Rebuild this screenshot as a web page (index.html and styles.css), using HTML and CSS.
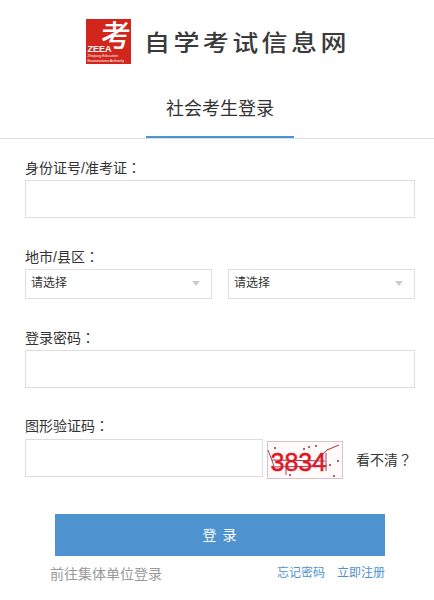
FILE: index.html
```
<!DOCTYPE html>
<html lang="zh-CN">
<head>
<meta charset="utf-8">
<title>社会考生登录</title>
<link rel="stylesheet" href="styles.css">
</head>
<body>
<header class="brand">
  <svg class="brand-mark" width="46" height="50" viewBox="0 0 46 50" aria-label="ZEEA">
    <rect x="0" y="5" width="45" height="45" fill="#d2261c"/>
    <text class="mark-glyph" x="15" y="32" fill="#fff">考</text>
    <text class="mark-name" x="1.5" y="37.5" fill="#fff">ZEEA</text>
    <text class="mark-small" x="1.5" y="42.5" fill="#fff">Zhejiang Education</text>
    <text class="mark-small" x="1.5" y="47.5" fill="#fff">Examinations Authority</text>
  </svg>
  <div class="brand-name">自学考试信息网</div>
</header>

<nav class="tabs">
  <div class="tab">社会考生登录</div>
</nav>

<form class="form">
  <div class="field field-id">
    <div class="label">身份证号/准考证<span class="punct" lang="zh-TW">：</span></div>
    <div class="box"></div>
  </div>
  <div class="field field-area">
    <div class="label">地市/县区<span class="punct" lang="zh-TW">：</span></div>
    <div class="selects">
      <div class="select"><span>请选择</span><i class="caret"></i></div>
      <div class="select"><span>请选择</span><i class="caret"></i></div>
    </div>
  </div>
  <div class="field field-pass">
    <div class="label">登录密码<span class="punct" lang="zh-TW">：</span></div>
    <div class="box"></div>
  </div>
  <div class="field field-code">
    <div class="label label-code">图形验证码<span class="punct" lang="zh-TW">：</span></div>
    <div class="code-row">
      <div class="box box-code"></div>
      <svg class="captcha" width="76" height="38" viewBox="0 0 76 38">
        <rect x="0.5" y="0.5" width="75" height="37" fill="#fffafa" stroke="#d8c4c8"/>
        <text class="captcha-text" x="3.5" y="30" fill="#e6141c" stroke="#e6141c" stroke-width="0.5">3834</text>
        <path d="M1 9 L7 25" stroke="#a8404c" stroke-width="1"/>
        <path d="M5 19 L58 20 M5 26 L60 25 M40 30 L60 9 L72 4" stroke="#b03048" stroke-width="1" fill="none"/>
        <path d="M19 27 V34 M59 12 V30" stroke="#a8404c" stroke-width="1"/>
        <g fill="#b06070">
          <rect x="36" y="7" width="2" height="2"/><rect x="41" y="5" width="2" height="2"/><rect x="48" y="4" width="2" height="2"/>
          <rect x="7" y="6" width="2" height="2"/><rect x="62" y="23" width="2" height="2"/><rect x="70" y="19" width="2" height="2"/>
          <rect x="22" y="33" width="2" height="2"/><rect x="66" y="34" width="2" height="2"/>
        </g>
      </svg>
      <span class="refresh">看不清<span class="punct" lang="zh-TW">？</span></span>
    </div>
  </div>
  <div class="submit">登 录</div>
  <div class="links">
    <a class="link-group">前往集体单位登录</a>
    <div class="link-side">
      <a class="link-blue">忘记密码</a>
      <a class="link-blue">立即注册</a>
    </div>
  </div>
</form>
</body>
</html>
```
FILE: styles.css
```
* { box-sizing: border-box; }
html, body { margin: 0; padding: 0; }
body {
  width: 434px;
  height: 600px;
  overflow: hidden;
  background: #fff;
  color: #333;
  font-family: "Liberation Sans", "Noto Sans CJK SC", sans-serif;
  font-size: 14px;
}
.punct { font-family: "Noto Sans CJK TC", sans-serif; }
.brand {
  height: 79px;
  padding: 14px 0 0 86px;
  display: flex;
  align-items: flex-start;
}
.brand-mark { display: block; flex: none; overflow: visible; }
.mark-glyph { font-family: "Noto Sans CJK SC", sans-serif; font-size: 30px; font-weight: 500; }
.mark-name { font-family: "Liberation Sans", sans-serif; font-size: 9px; font-weight: 700; }
.mark-small { font-family: "Liberation Sans", sans-serif; font-size: 3.6px; }
.brand-name {
  margin: 13px 0 0 12px;
  font-family: "Noto Sans CJK SC", sans-serif;
  font-size: 26px;
  font-weight: 500;
  line-height: 28px;
  letter-spacing: 3.4px;
  color: #3a3a3a;
  white-space: nowrap;
  transform: scaleY(0.88);
}
.tabs {
  height: 60px;
  display: flex;
  justify-content: center;
  border-bottom: 1px solid #ddd;
  padding-left: 6px;
}
.tab {
  width: 148px;
  height: 59px;
  text-align: center;
  font-size: 18px;
  line-height: 60px;
  color: #333;
  border-bottom: 2px solid #4e93cf;
}
.form { padding: 0 19px 0 25px; }
.field-id { padding-top: 18px; }
.field-area { padding-top: 28px; }
.field-pass { padding-top: 28px; }
.field-code { padding-top: 27px; }
.label { height: 23px; line-height: 20px; color: #333; }
.label-code { height: 24px; }
.box { height: 38px; border: 1px solid #ddd; background: #fff; }
.selects { display: flex; justify-content: space-between; }
.select {
  width: 187px;
  height: 30px;
  border: 1px solid #ddd;
  display: flex;
  align-items: center;
  justify-content: space-between;
  padding: 0 11px 6px 5px;
  font-size: 12px;
}
.caret {
  width: 0;
  height: 0;
  margin-top: 4px;
  border-left: 4px solid transparent;
  border-right: 4px solid transparent;
  border-top: 5px solid #ccc;
}
.code-row { display: flex; align-items: flex-start; }
.box-code { width: 238px; flex: none; }
.captcha { display: block; flex: none; margin: 2px 0 0 4px; }
.captcha-text { font-family: "Liberation Sans", sans-serif; font-size: 25px; }
.refresh { margin: 10px 0 0 13px; line-height: 20px; white-space: nowrap; }
.submit {
  width: 330px;
  height: 42px;
  margin: 35px 0 0 30px;
  background: #4e93cf;
  color: #fff;
  text-align: center;
  line-height: 42px;
  font-size: 14px;
  letter-spacing: 1px;
}
.links {
  width: 335px;
  margin: 8px 0 0 25px;
  display: flex;
  justify-content: space-between;
  align-items: flex-start;
}
.link-group { font-size: 14px; line-height: 20px; color: #999; }
.link-side { display: flex; gap: 12px; font-size: 12px; line-height: 18px; }
.link-blue { color: #4e93cf; }
```
